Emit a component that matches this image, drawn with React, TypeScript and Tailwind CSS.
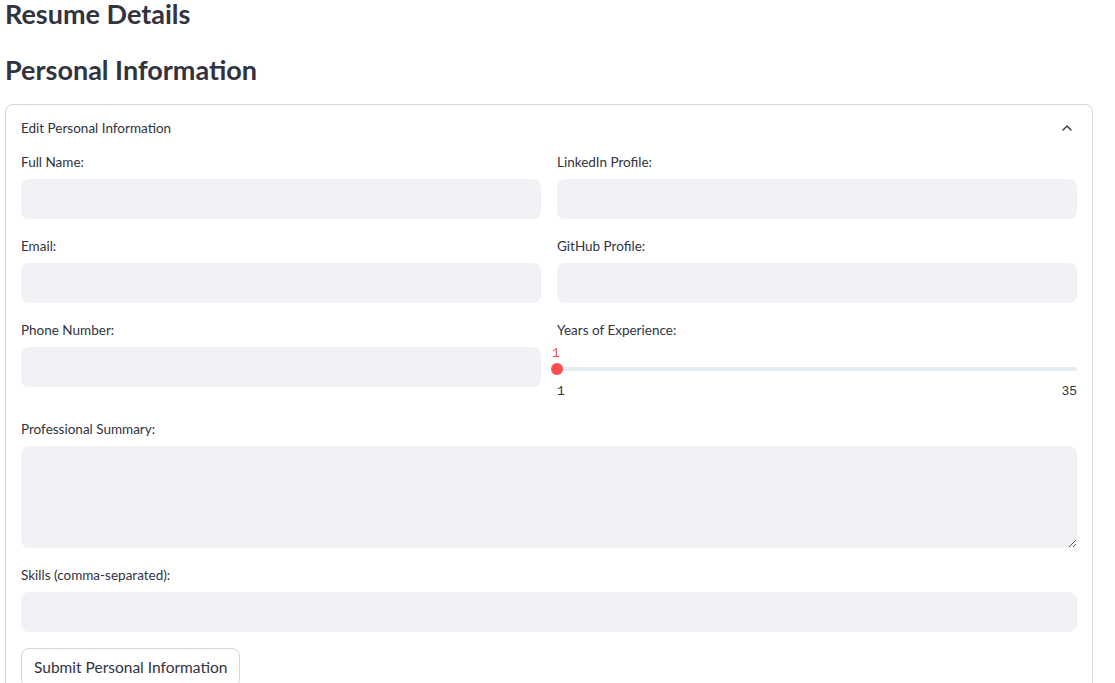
import React from 'react'
import { ChevronUp } from 'lucide-react'

const font = { fontFamily: 'Lato, "Noto Sans", sans-serif' }

const Label: React.FC<{ children: React.ReactNode }> = ({ children }) => (
  <div className="h-6 mb-1 flex items-center pb-[1px] text-[13.5px] text-[#31333f]">{children}</div>
)

const TextInput: React.FC<{ label: string }> = ({ label }) => (
  <div className="flex flex-col">
    <Label>{label}</Label>
    <input className="h-10 w-full rounded-lg bg-[#f0f2f6] px-3 text-[14px] outline-none" />
  </div>
)

const Slider: React.FC = () => (
  <div className="flex flex-col">
    <Label>Years of Experience:</Label>
    <div className="relative h-[55px]">
      <span className="absolute left-[-5px] top-[-3px] font-['Liberation_Mono',monospace] text-[13px] text-[#ff4b4b]">1</span>
      <div className="absolute left-0 right-0 top-[20px] h-1 rounded-full bg-[#e6eaf1]" />
      <div className="absolute left-[-6px] top-[16px] h-3 w-3 rounded-full bg-[#ff4b4b]" />
      <div className="absolute left-0 right-0 top-[35px] flex justify-between font-['Liberation_Mono',monospace] text-[13px] text-[#31333f]">
        <span>1</span>
        <span>35</span>
      </div>
    </div>
  </div>
)

export default function App() {
  return (
    <div className="min-h-screen bg-white pl-[5px] pr-[22px] text-[#31333f]" style={font}>
      <h3 className="text-[27px] font-bold leading-[28px]">Resume Details</h3>
      <h3 className="mt-[25px] text-[27px] font-bold leading-[34px]">Personal Information</h3>

      <div className="mt-[17px] rounded-lg border border-[#d6d6d9]">
        <div className="flex h-[46px] items-center justify-between pl-[15px] pr-[15px] text-[13.5px]">
          <span>Edit Personal Information</span>
          <ChevronUp size={16} strokeWidth={2} className="mr-[2px] text-[#31333f]" />
        </div>

        <div className="flex flex-col gap-4 pb-4 pl-[15px] pr-[15px]">
          <div className="grid grid-cols-2 gap-4">
            <div className="flex flex-col gap-4">
              <TextInput label="Full Name:" />
              <TextInput label="Email:" />
              <TextInput label="Phone Number:" />
            </div>
            <div className="flex flex-col gap-4">
              <TextInput label="LinkedIn Profile:" />
              <TextInput label="GitHub Profile:" />
              <Slider />
            </div>
          </div>

          <div className="flex flex-col">
            <Label>Professional Summary:</Label>
            <textarea className="h-[102px] w-full resize-y rounded-lg bg-[#f0f2f6] px-3 py-2 text-[14px] outline-none" />
          </div>

          <TextInput label="Skills (comma-separated):" />

          <div>
            <button className="h-[40px] rounded-lg border border-[#d6d6d9] bg-white px-3 text-[15.5px] text-[#31333f]">
              Submit Personal Information
            </button>
          </div>
        </div>
      </div>
    </div>
  )
}
